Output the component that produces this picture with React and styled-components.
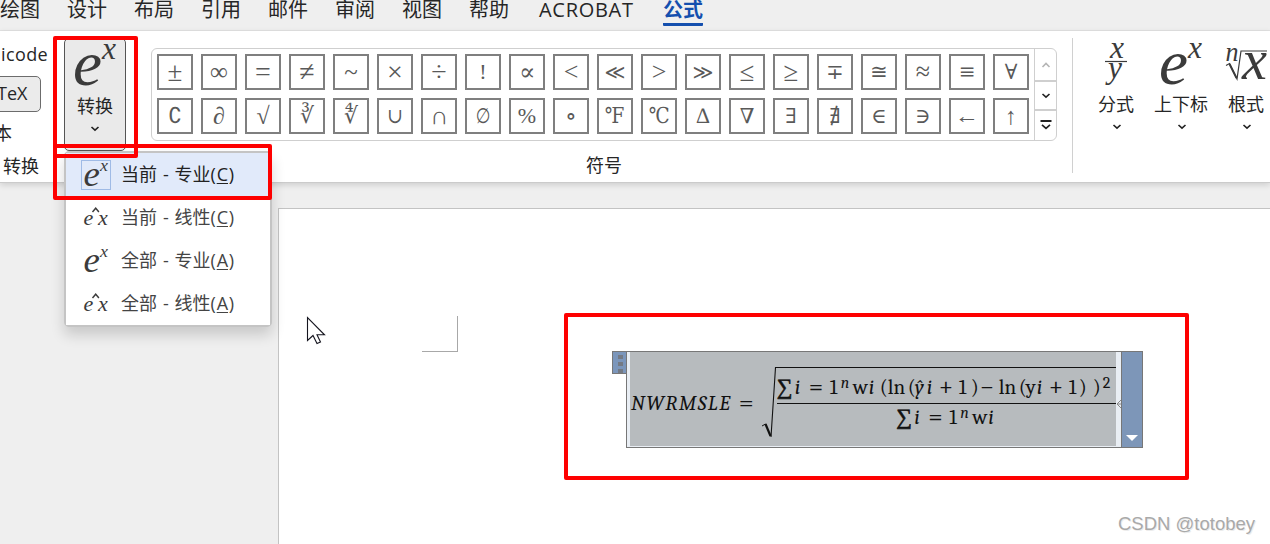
import React from "react";
import styled, { createGlobalStyle } from "styled-components";

const tabs = ["绘图", "设计", "布局", "引用", "邮件", "审阅", "视图", "帮助"];

const symbols = [
  { s: "±", size: 27 },
  { s: "∞", size: 25 },
  { s: "=", size: 28 },
  { s: "≠", size: 28 },
  { s: "~", size: 25 },
  { s: "×", size: 28 },
  { s: "÷", size: 28 },
  { s: "!", size: 22 },
  { s: "∝", size: 24 },
  { s: "<", size: 26 },
  { s: "≪", size: 20 },
  { s: ">", size: 26 },
  { s: "≫", size: 20 },
  { s: "≤", size: 27 },
  { s: "≥", size: 27 },
  { s: "∓", size: 21 },
  { s: "≅", size: 21 },
  { s: "≈", size: 26 },
  { s: "≡", size: 27 },
  { s: "∀", size: 21 },
  { s: "∁", size: 22 },
  { s: "∂", size: 24 },
  { s: "√", size: 24 },
  { s: "∛", size: 22 },
  { s: "∜", size: 22 },
  { s: "∪", size: 21, squeeze: 0.9 },
  { s: "∩", size: 25 },
  { s: "∅", size: 21, squeeze: 0.8 },
  { s: "%", size: 22 },
  { s: "∘", size: 24 },
  { s: "℉", size: 22, squeeze: 0.85 },
  { s: "℃", size: 22, squeeze: 0.85 },
  { s: "∆", size: 22 },
  { s: "∇", size: 21 },
  { s: "∃", size: 21 },
  { s: "∄", size: 21 },
  { s: "∈", size: 21 },
  { s: "∋", size: 21 },
  { s: "←", size: 22, squeeze: 1.1 },
  { s: "↑", size: 24 },
];

const menuItems = [
  { text: "当前 - 专业", hotkey: "C", pro: true, active: true },
  { text: "当前 - 线性", hotkey: "C" },
  { text: "全部 - 专业", hotkey: "A", pro: true },
  { text: "全部 - 线性", hotkey: "A" },
];

// t: text, w: advance width, i: italic, s: superscript, b: big operator, o: operator
const numerator = [
  { t: "∑", w: 18, b: true },
  { t: "i", w: 14, i: true },
  { t: "=", w: 21, o: true },
  { t: "1", w: 11 },
  { t: "n", w: 12, i: true, s: true },
  { t: "w", w: 16 },
  { t: "i", w: 11, i: true },
  { t: "(", w: 8 },
  { t: "ln", w: 20 },
  { t: "(", w: 7 },
  { t: "ŷ", w: 12, i: true },
  { t: "i", w: 12, i: true },
  { t: "+", w: 20, o: true },
  { t: "1", w: 12 },
  { t: ")", w: 9 },
  { t: "−", w: 19, o: true },
  { t: "ln", w: 20 },
  { t: "(", w: 7 },
  { t: "y", w: 11 },
  { t: "i", w: 12, i: true },
  { t: "+", w: 20, o: true },
  { t: "1", w: 10 },
  { t: ")", w: 14 },
  { t: ")", w: 10 },
  { t: "2", w: 10, s: true },
];

const denominator = [
  { t: "∑", w: 18, b: true },
  { t: "i", w: 14, i: true },
  { t: "=", w: 21, o: true },
  { t: "1", w: 11 },
  { t: "n", w: 12, i: true, s: true },
  { t: "w", w: 16 },
  { t: "i", w: 8, i: true },
];

const Chevron = ({ up, color = "#222" }) => (
  <svg width="10" height="6" viewBox="0 0 10 6">
    <path
      d={up ? "M1.5 5 L5 1.5 L8.5 5" : "M1.5 1 L5 4.2 L8.5 1"}
      fill="none"
      stroke={color}
      strokeWidth="1.6"
    />
  </svg>
);

const ScriptIcon = ({ size }) => (
  <svg width={size} height={size} viewBox="0 0 46 46">
    <IconText x="1" y="42" fontSize="63" textLength="29" lengthAdjust="spacingAndGlyphs">e</IconText>
    <IconText x="30" y="15.5" fontSize="31" textLength="14" lengthAdjust="spacingAndGlyphs">x</IconText>
  </svg>
);

const LinearIcon = () => (
  <svg width="28" height="26" viewBox="0 0 28 26">
    <IconText x="1.5" y="20" fontSize="22">e</IconText>
    <IconText x="16" y="20" fontSize="22">x</IconText>
    <path d="M10.5 7 L13.7 3.2 L16.9 7" fill="none" stroke="#3b3b3b" strokeWidth="1.4" />
  </svg>
);

const FractionIcon = () => (
  <svg width="24" height="46" viewBox="0 0 24 46">
    <IconText x="6" y="16" fontSize="31" textLength="14" lengthAdjust="spacingAndGlyphs">x</IconText>
    <path d="M1 19.5 H23" stroke="#3b3b3b" strokeWidth="1.2" />
    <IconText x="4" y="36" fontSize="31" textLength="14" lengthAdjust="spacingAndGlyphs">y</IconText>
  </svg>
);

const RadicalIcon = () => (
  <svg width="44" height="46" viewBox="0 0 44 46">
    <IconText x="1.5" y="18.5" fontSize="27" textLength="13" lengthAdjust="spacingAndGlyphs">n</IconText>
    <path d="M2 23.5 L5.5 21.5 L13 37 L17 9 H43" fill="none" stroke="#3b3b3b" strokeWidth="1.2" />
    <path d="M5.5 22 L12.5 36" stroke="#3b3b3b" strokeWidth="2" />
    <IconText x="18" y="37" fontSize="57" textLength="25" lengthAdjust="spacingAndGlyphs">x</IconText>
  </svg>
);

const MathRow = ({ parts, lower }) => (
  <StMathRow $lower={lower}>
    {parts.map((p, idx) => (
      <StToken key={idx} $w={p.w} $italic={p.i} $sup={p.s} $big={p.b} $op={p.o}>
        {p.t}
      </StToken>
    ))}
  </StMathRow>
);

const App = () => {
  return (
    <>
      <GlobalStyle />
      <Window>
        <TabBar>
          {tabs.map((tab) => (
            <Tab key={tab}>{tab}</Tab>
          ))}
          <Tab $latin>ACROBAT</Tab>
          <Tab $active>公式</Tab>
        </TabBar>

        <Ribbon>
          <ToolGroup>
            <ToolText>icode</ToolText>
            <LatexButton>TeX</LatexButton>
            <ToolText $cut>本</ToolText>
            <ToolLabel>转换</ToolLabel>
          </ToolGroup>

          <ConvertButton>
            <ScriptIcon size={46} />
            <span>转换</span>
            <Chevron />
          </ConvertButton>

          <SymbolGroup>
            <Gallery>
              <SymbolGrid>
                {symbols.map((item) => (
                  <SymbolCell key={item.s} $size={item.size} $squeeze={item.squeeze}>
                    <span>{item.s}</span>
                  </SymbolCell>
                ))}
              </SymbolGrid>
              <Scroller>
                <ScrollButton $h={31}>
                  <Chevron up color="#b5b5b5" />
                </ScrollButton>
                <ScrollButton $h={29}>
                  <Chevron />
                </ScrollButton>
                <ScrollButton $h={30}>
                  <svg width="12" height="10" viewBox="0 0 12 10">
                    <path d="M0.5 1 H11.5" stroke="#222" strokeWidth="2" />
                    <path d="M2 4.8 L6 8.4 L10 4.8" fill="none" stroke="#222" strokeWidth="1.7" />
                  </svg>
                </ScrollButton>
              </Scroller>
            </Gallery>
            <GroupLabel>符号</GroupLabel>
          </SymbolGroup>

          <Separator />

          <StructureGroup>
            <StructureButton $w={36}>
              <FractionIcon />
              <span>分式</span>
              <Chevron />
            </StructureButton>
            <StructureButton $w={54}>
              <ScriptIcon size={46} />
              <span>上下标</span>
              <Chevron />
            </StructureButton>
            <StructureButton $w={36}>
              <RadicalIcon />
              <span>根式</span>
              <Chevron />
            </StructureButton>
          </StructureGroup>
        </Ribbon>

        <Workspace>
          <Page>
            <CropMark />
            <Equation>
              <Handle>
                <i />
                <i />
                <i />
              </Handle>
              <EquationFrame>
                <Selection>
                  <Variable>NWRMSLE</Variable>
                  <Equals>=</Equals>
                  <svg width="16" height="72" viewBox="0 0 16 72">
                    <path d="M1 59 L4.5 57" fill="none" stroke="#111" strokeWidth="1" />
                    <path d="M4.5 57 L9.5 69" fill="none" stroke="#111" strokeWidth="2.2" />
                    <path d="M10 70 L14.5 0.5 H16" fill="none" stroke="#111" strokeWidth="1.1" />
                  </svg>
                  <Radicand>
                    <MathRow parts={numerator} />
                    <FractionBar />
                    <MathRow parts={denominator} lower />
                  </Radicand>
                </Selection>
                <EndMark width="5" height="10" viewBox="0 0 5 10">
                  <path d="M5 1 L1 5 L5 9 M1 5 H5" fill="none" stroke="#888" />
                </EndMark>
              </EquationFrame>
              <OptionsBar>
                <svg width="12" height="6" viewBox="0 0 12 6">
                  <path d="M0 0 H12 L6 6 Z" fill="#fff" />
                </svg>
              </OptionsBar>
            </Equation>
          </Page>
        </Workspace>

        <Menu>
          {menuItems.map((item, idx) => (
            <MenuItem key={idx} $active={item.active}>
              <MenuIcon $active={item.active}>
                {item.pro ? <ScriptIcon size={26} /> : <LinearIcon />}
              </MenuIcon>
              <span>
                {item.text}(<u>{item.hotkey}</u>)
              </span>
            </MenuItem>
          ))}
        </Menu>

        <Highlight $x={53} $y={36} $w={85} $h={122} />
        <Highlight $x={53} $y={144} $w={219} $h={56} />
        <Highlight $x={564} $y={313} $w={625} $h={167} />

        <Cursor width="20" height="30" viewBox="0 0 20 30">
          <path
            d="M1.5 1.5 V24.5 L7 19.5 L11 27.5 L14.5 26 L11 18.8 H18.5 Z"
            fill="#fff"
            stroke="#15151f"
            strokeWidth="1.1"
          />
        </Cursor>
        <Watermark>CSDN @totobey</Watermark>
      </Window>
    </>
  );
};

export default App;

const GlobalStyle = createGlobalStyle`
  * {
    box-sizing: border-box;
  }
  body {
    margin: 0;
    overflow: hidden;
    font-family: "Open Sans", "Noto Sans CJK SC", sans-serif;
    color: #262626;
  }
  svg {
    display: block;
    flex: none;
  }
`;

const Window = styled.div`
  position: relative;
  width: 1270px;
  height: 544px;
  display: flex;
  flex-direction: column;
  overflow: hidden;
  background: #efefef;
`;

const TabBar = styled.div`
  height: 31px;
  flex: none;
  display: flex;
  gap: 27px;
  border-bottom: 1px solid #e2e2e2;
`;

const Tab = styled.div`
  height: 26px;
  margin: ${(p) => (p.$latin ? "0 3px" : "0")};
  width: ${(p) => (p.$latin ? "94px" : "40px")};
  font-size: 20px;
  line-height: 19px;
  letter-spacing: ${(p) => (p.$latin ? "0.7px" : "0")};
  white-space: nowrap;
  font-weight: ${(p) => (p.$active ? 700 : 400)};
  color: ${(p) => (p.$active ? "#144fae" : "#262626")};
  border-bottom: 3px solid ${(p) => (p.$active ? "#144fae" : "transparent")};
  border-radius: 1px;
`;

const Ribbon = styled.div`
  height: 152px;
  flex: none;
  display: flex;
  background: #fff;
  border-bottom: 1px solid #cbcbcb;
  box-shadow: 0 2px 6px rgba(0, 0, 0, 0.14);
  font-size: 18px;
  z-index: 1;
`;

const ToolGroup = styled.div`
  width: 64px;
  padding-top: 11px;
  display: flex;
  flex-direction: column;
  line-height: 24px;
`;

const ToolText = styled.div`
  margin-left: ${(p) => (p.$cut ? "-6px" : "1px")};
  margin-top: ${(p) => (p.$cut ? "9px" : "0")};
  letter-spacing: 0.4px;
`;

const LatexButton = styled.div`
  width: 46px;
  height: 36px;
  margin: 10px 0 0 -5px;
  padding-left: 1px;
  line-height: 33px;
  background: #ebebeb;
  border: 1px solid #6c6c6c;
  border-radius: 5px;
`;

const ToolLabel = styled.div`
  margin: 9px 0 0 3px;
`;

const ConvertButton = styled.div`
  width: 62px;
  height: 113px;
  margin-top: 7px;
  display: flex;
  flex-direction: column;
  align-items: center;
  background: #eaeaea;
  border: 1px solid #555;
  border-radius: 5px;
  padding-top: 4px;
  span {
    margin: 4px 0 7px;
    line-height: 26px;
  }
`;

const SymbolGroup = styled.div`
  width: 906px;
  margin: 17px 0 0 25px;
  display: flex;
  flex-direction: column;
  align-items: center;
`;

const Gallery = styled.div`
  width: 906px;
  height: 93px;
  display: flex;
  border: 1px solid #cfcfcf;
  border-radius: 6px;
`;

const SymbolGrid = styled.div`
  display: grid;
  grid-template-columns: repeat(20, 36px);
  grid-auto-rows: 36px;
  gap: 8px;
  width: 882px;
  padding: 5px 0 0 5px;
`;

const SymbolCell = styled.div`
  border: 2px solid #7f7f7f;
  color: #595959;
  font-family: "Liberation Serif", "DejaVu Serif", "DejaVu Sans", serif;
  font-size: ${(p) => p.$size}px;
  line-height: 32px;
  height: 36px;
  display: flex;
  justify-content: center;
  white-space: nowrap;
  span {
    transform: scaleX(${(p) => p.$squeeze || 1});
  }
`;

const Scroller = styled.div`
  width: 22px;
  border-left: 1px solid #cfcfcf;
`;

const ScrollButton = styled.div`
  height: ${(p) => p.$h}px;
  display: flex;
  align-items: center;
  justify-content: center;
  & + & {
    border-top: 2px solid #cfcfcf;
  }
`;

const GroupLabel = styled.div`
  margin-top: 11px;
  line-height: 26px;
`;

const Separator = styled.div`
  width: 1px;
  height: 135px;
  margin: 7px 0 0 15px;
  background: #d0d0d0;
`;

const StructureGroup = styled.div`
  display: flex;
  gap: 20px;
  margin: 11px 0 0 25px;
`;

const StructureButton = styled.div`
  width: ${(p) => p.$w}px;
  display: flex;
  flex-direction: column;
  align-items: center;
  white-space: nowrap;
  span {
    margin: 3px 0 7px;
    line-height: 26px;
  }
  span + svg {
    margin-left: 2px;
  }
`;

const IconText = styled.text`
  font-family: "Liberation Serif", serif;
  font-style: italic;
  fill: #3b3b3b;
`;

const Workspace = styled.div`
  flex: 1;
  padding: 25px 0 0 278px;
`;

const Page = styled.div`
  height: 336px;
  display: flex;
  align-items: flex-start;
  padding: 107px 0 0 143px;
  background: #fff;
  border: 1px solid #c3c3c3;
  border-right: none;
  border-bottom: none;
`;

const CropMark = styled.div`
  width: 36px;
  height: 36px;
  border-right: 1px solid #a8a8a8;
  border-bottom: 1px solid #a8a8a8;
`;

const Equation = styled.div`
  display: flex;
  align-items: flex-start;
  margin: 35px 0 0 154px;
`;

const Handle = styled.div`
  width: 14px;
  height: 23px;
  padding: 3px 3px 0 0;
  display: flex;
  flex-direction: column;
  align-items: flex-end;
  gap: 3px;
  background: #7b96bb;
  border: 1px solid #777;
  border-right: none;
  i {
    width: 5px;
    height: 4px;
    background: #747a84;
  }
`;

const EquationFrame = styled.div`
  width: 496px;
  height: 97px;
  display: flex;
  background: #e9eef4;
  border: 1px solid #777;
`;

const Selection = styled.div`
  width: 486px;
  height: 94px;
  margin-left: 3px;
  padding-top: 15px;
  display: flex;
  align-items: flex-start;
  background: #b7bbbe;
  color: #111;
  font-family: Cambria, Caladea, "Liberation Serif", serif;
  font-size: 21px;
`;

const Variable = styled.div`
  width: 109px;
  padding-left: 1px;
  margin-top: 24px;
  line-height: 24px;
  font-style: italic;
  letter-spacing: 1.4px;
`;

const Equals = styled.div`
  width: 22px;
  margin-top: 24px;
  line-height: 24px;
  font-size: 27px;
`;

const Radicand = styled.div`
  width: 340px;
  border-top: 1px solid #111;
`;

const FractionBar = styled.div`
  width: 339px;
  height: 1px;
  background: #111;
`;

const StMathRow = styled.div`
  height: ${(p) => (p.$lower ? 30 : 35)}px;
  padding-top: ${(p) => (p.$lower ? 1 : 7)}px;
  display: flex;
  justify-content: ${(p) => (p.$lower ? "center" : "flex-start")};
`;

const StToken = styled.span`
  flex: none;
  width: ${(p) => p.$w}px;
  line-height: ${(p) => (p.$sup ? "16px" : "24px")};
  font-family: ${(p) => (p.$big ? '"Liberation Serif", serif' : "inherit")};
  font-size: ${(p) => (p.$sup ? 16 : p.$op ? 26 : p.$big ? 22 : 21)}px;
  font-style: ${(p) => (p.$italic ? "italic" : "normal")};
  -webkit-text-stroke: ${(p) => (p.$big ? "0.6px #111" : "0")};
  white-space: nowrap;
`;

const EndMark = styled.svg`
  margin-top: 47px;
`;

const OptionsBar = styled.div`
  width: 21px;
  height: 97px;
  display: flex;
  align-items: flex-end;
  justify-content: center;
  padding-bottom: 6px;
  background: #7d96b8;
  border: 1px solid #777;
  border-left: none;
`;

/* dropdown of the convert button */
const Menu = styled.div`
  position: absolute;
  left: 64px;
  top: 151px;
  z-index: 2;
  width: 208px;
  height: 176px;
  background: #fff;
  border: 2px solid #c4c4c4;
  border-radius: 5px;
  box-shadow: 0 8px 14px rgba(0, 0, 0, 0.16);
`;

const MenuItem = styled.div`
  height: 43px;
  padding-left: 15px;
  display: flex;
  align-items: center;
  font-size: 18px;
  line-height: 26px;
  word-spacing: 1.2px;
  color: ${(p) => (p.$active ? "#222" : "#444")};
  background: ${(p) => (p.$active ? "#e1eafa" : "#fff")};
  span {
    margin-top: -2px;
  }
  u {
    margin: 0 0.8px;
    text-underline-offset: 2px;
    text-decoration-thickness: 1px;
  }
`;

const MenuIcon = styled.div`
  width: 30px;
  height: 30px;
  margin-right: 10px;
  display: flex;
  align-items: center;
  justify-content: center;
  border: 1px solid ${(p) => (p.$active ? "#9fbbe6" : "transparent")};
`;

const Highlight = styled.div`
  position: absolute;
  z-index: 3;
  left: ${(p) => p.$x}px;
  top: ${(p) => p.$y}px;
  width: ${(p) => p.$w}px;
  height: ${(p) => p.$h}px;
  border: 4px solid #fe0000;
  border-radius: 2px;
`;

const Cursor = styled.svg`
  position: absolute;
  left: 306px;
  top: 316px;
`;

const Watermark = styled.div`
  position: absolute;
  right: 15px;
  bottom: 8px;
  font-family: "Liberation Sans", sans-serif;
  font-size: 18.5px;
  line-height: 24px;
  color: #a9a9a9;
  text-shadow: 1px 1px 0 #ececec;
`;
